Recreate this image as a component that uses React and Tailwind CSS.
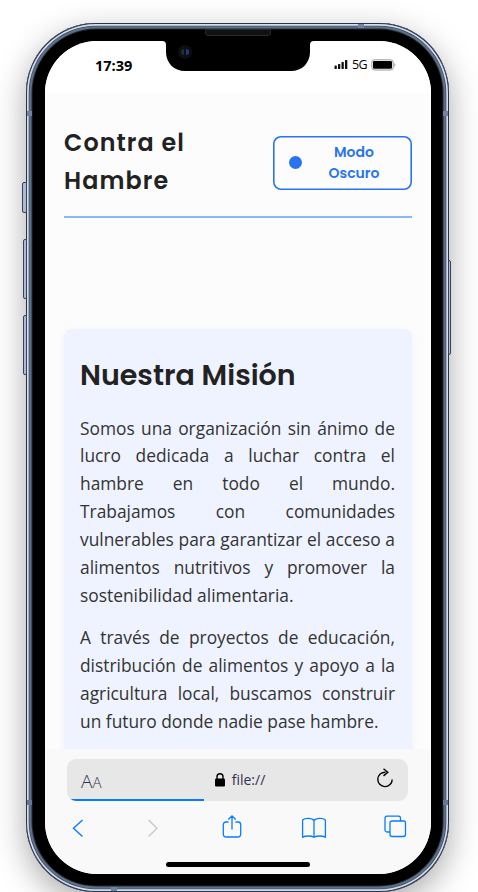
const poppins = "font-['Poppins','Inter',sans-serif] text-[#222]";

function StatusBar() {
  return (
    <div className="flex h-[52px] shrink-0 items-start justify-between bg-white pl-[50px] pr-[35px] font-['Open_Sans',sans-serif] text-black">
      <span className="mt-[15px] text-[14.5px] font-bold leading-5">17:39</span>
      <div className="mt-[13px] flex h-5 items-center">
        <svg className="mt-px" width="14" height="9" viewBox="0 0 14 9" fill="#111">
          <rect x="0.5" y="5.5" width="2.3" height="3.5" rx=".6" />
          <rect x="4" y="4" width="2.3" height="5" rx=".6" />
          <rect x="7.5" y="2" width="2.3" height="7" rx=".6" />
          <rect x="11" y="0" width="2.3" height="9" rx=".6" />
        </svg>
        <span className="ml-1 mt-[2px] w-[19px] whitespace-nowrap text-[12.5px] font-medium leading-5 tracking-[-0.6px]">5G</span>
        <svg className="mt-px" width="25" height="12" viewBox="0 0 25 12">
          <rect x="0.8" y="0.8" width="21.4" height="10.2" rx="2.5" fill="#fff" stroke="#999" />
          <rect x="2" y="2" width="19" height="7.8" rx="1.3" fill="#000" />
          <path d="M23.3 4c1.6.8 1.6 3 0 4z" fill="#aaa" />
        </svg>
      </div>
    </div>
  );
}

function Header() {
  return (
    <header className="flex h-[125px] shrink-0 items-start justify-between border-b-2 border-[#8ab6fc] pt-[31px]">
      <h1 className={`${poppins} w-[140px] text-[23.8px] font-semibold leading-[38.4px] tracking-[1.1px]`}>
        Contra el Hambre
      </h1>
      <button className="mt-[11.5px] flex h-[54px] w-[139.5px] items-center rounded-lg pl-[16.5px] font-['Poppins','Inter',sans-serif] text-[14px] font-semibold leading-[21px] text-[#2874f0] shadow-[inset_0_0_0_1.6px_#2874f0]">
        <span className="h-[13px] w-[13px] shrink-0 rounded-full bg-[#2874f0]" />
        <span className="ml-6 w-[56px] text-center">Modo Oscuro</span>
      </button>
    </header>
  );
}

function Mission() {
  return (
    <section className="mt-[111px] h-[480px] shrink-0 rounded-lg bg-[#eff3ff] px-4 pt-[22px] shadow-[0_2px_8px_rgba(0,0,0,0.05)]">
      <h2 className={`${poppins} whitespace-nowrap text-[28.5px] font-semibold leading-[48px]`}>Nuestra Misión</h2>
      <div className="mt-[15.5px] w-[315px] space-y-[15px] text-justify font-['Open_Sans',sans-serif] text-[17.36px] leading-[27.84px] text-[#333]">
        <p>
          Somos una organización sin ánimo de lucro dedicada a luchar contra el hambre en todo el mundo. Trabajamos
          con comunidades vulnerables para garantizar el acceso a alimentos nutritivos y promover la sostenibilidad
          alimentaria.
        </p>
        <p>
          A través de proyectos de educación, distribución de alimentos y apoyo a la agricultura local, buscamos
          construir un futuro donde nadie pase hambre.
        </p>
      </div>
    </section>
  );
}

function BrowserBar() {
  return (
    <footer className="relative flex h-[125px] shrink-0 flex-col bg-[#f9f9f9] pl-[22px] pr-[23px] pt-[10px]">
      <div className="relative flex h-[42px] items-center justify-between overflow-hidden rounded-[9px] bg-[#e7e7e7] pl-[14px] pr-[14px] font-['Open_Sans',sans-serif] text-[#303050]">
        <span className="w-[30px] whitespace-nowrap pt-0.5 font-light">
          <span className="text-[19px]">A</span>
          <span className="text-[15px]">A</span>
        </span>
        <span className="ml-[7px] flex items-center gap-[7px]">
          <svg width="10" height="14" viewBox="0 0 10 14">
            <rect y="5.5" width="10" height="8" rx="1.2" fill="#000" />
            <path d="M2 6V3.8a3 3 0 0 1 6 0V6" fill="none" stroke="#000" strokeWidth="1.4" />
          </svg>
          <span className="-mt-[2px] text-[14px]">file://</span>
        </span>
        <svg className="-mt-1 ml-[14px]" width="18" height="20" viewBox="0 0 18 20" fill="none" stroke="#000" strokeWidth="1.4">
          <path d="M9.5 4.2A7.2 7.2 0 1 0 16.2 11.4M7.5.8l4.3 3.5-4.3 3.6" />
        </svg>
        <span className="absolute bottom-0 left-0 h-[2px] w-[137px] bg-[#087cff]" />
      </div>
      <div className="mt-[13px] flex h-7 items-center pl-[5px] text-[#087cff]">
        <svg width="12" height="18" viewBox="0 0 12 18" fill="none" stroke="currentColor" strokeWidth="1.4">
          <path d="M10.5 1 1.5 9.3l9 8.2" />
        </svg>
        <svg className="ml-[63px]" width="12" height="18" viewBox="0 0 12 18" fill="none" stroke="#c9c9c9" strokeWidth="1.4">
          <path d="m1.5 1 8.5 8.3-8.5 8.2" />
        </svg>
        <svg className="-mt-[3px] ml-[62.5px]" width="20" height="25" viewBox="0 0 20 25" fill="none" stroke="currentColor" strokeWidth="1.3">
          <path d="M6.5 8H4a2.7 2.7 0 0 0-2.7 2.7v9.6A2.7 2.7 0 0 0 4 23h12a2.7 2.7 0 0 0 2.7-2.7v-9.6A2.7 2.7 0 0 0 16 8h-2.5M10 15.5V1.8M6.3 5.500l3.700-3.700 3.700 3.700" />
        </svg>
        <svg className="ml-[59.5px]" width="26" height="22" viewBox="0 0 26 22" fill="none" stroke="currentColor" strokeWidth="1.3">
          <path d="M13 3.5C11 .8 4 .8 1.6 3v17.2c3-1.6 8.6-1.6 11.4 0 2.8-1.6 8.4-1.6 11.4 0V3C22 .8 15 .8 13 3.5v16.7" />
        </svg>
        <svg className="-mt-[3px] ml-[57px]" width="23" height="23" viewBox="0 0 23 23" fill="none" stroke="currentColor" strokeWidth="1.3">
          <rect x="6" y="6" width="15.5" height="15.5" rx="2" />
          <path d="M6 17H3a2 2 0 0 1-2-2V3.2a2 2 0 0 1 2-2h11.500a2 2 0 0 1 2 2V6" />
        </svg>
      </div>
      <div className="absolute bottom-[7.5px] left-[121px] h-[4.5px] w-[144px] rounded-full bg-black" />
    </footer>
  );
}

function SideButton({ className }) {
  return <div className={`absolute border border-[#36435a] bg-[#acbbd2] ${className}`} />;
}

export default function App() {
  return (
    <div className="h-[892px] w-[478px] overflow-hidden bg-white pl-[26px] pt-[23px]">
      <div className="relative h-[869px] w-[423px] rounded-[70px] bg-black pb-[18px] pl-[19px] pr-[18px] pt-[18px] shadow-[0_10px_32px_rgba(0,0,0,0.34),inset_0_0_0_1px_#2b3346,inset_0_0_0_2.7px_#d5dcec,inset_0_0_0_3.3px_#35445b,inset_0_0_0_5.5px_#5b7089,inset_0_0_0_6.5px_#292b2e]">
        <SideButton className="left-[-4px] top-[159px] h-[31px] w-[5px] rounded-l-[2px]" />
        <SideButton className="left-[-3px] top-[216px] h-[60px] w-1 rounded-l-[2px]" />
        <SideButton className="left-[-3px] top-[292px] h-[60px] w-1 rounded-l-[2px]" />
        <SideButton className="left-[422px] top-[237px] h-[95px] w-[3px] rounded-r-[2px]" />
        <div className="absolute left-px top-[88px] h-[5px] w-[5px] bg-[#7182a3]" />
        <div className="absolute right-px top-[88px] h-[5px] w-[5px] bg-[#7182a3]" />
        <div className="absolute left-px top-[777px] h-[5px] w-[5px] bg-[#667897]" />
        <div className="absolute right-px top-[777px] h-[5px] w-[5px] bg-[#667897]" />
        <div className="absolute left-[332px] top-px h-1 w-[6px] bg-[#7182a3]" />
        <div className="absolute bottom-px left-[85px] h-1 w-[6px] bg-[#7182a3]" />

        <div className="flex h-[833px] w-[386px] flex-col overflow-hidden rounded-[52px] bg-[#fcfcfc]">
          <StatusBar />
          <main className="flex h-[656px] shrink-0 flex-col overflow-hidden px-[19px]">
            <Header />
            <Mission />
          </main>
          <BrowserBar />
        </div>

        <svg className="absolute left-[136px] top-[17px]" width="152" height="32" viewBox="0 0 152 32">
          <path d="M0 0h152v1c-3 0-4 1.5-4 4v7c0 11-8 19-19 19H23C12 31 4 23 4 12V5c0-2.5-1-4-4-4z" fill="#000" />
        </svg>
        <div className="absolute left-[152px] top-[22px] flex h-[14px] w-[14px] items-center justify-center rounded-full bg-[#0d0e10]">
          <div className="flex h-[6px] w-[8px] gap-[2px] overflow-hidden rounded-full">
            <span className="w-[3px] bg-[#1b3038]" />
            <span className="w-[3px] bg-[#25358c]" />
          </div>
        </div>
        <div className="absolute left-[179px] top-[6px] h-[7px] w-[66px] rounded-b-[3px] border border-[#292929] bg-[#101112]" />
      </div>
    </div>
  );
}
